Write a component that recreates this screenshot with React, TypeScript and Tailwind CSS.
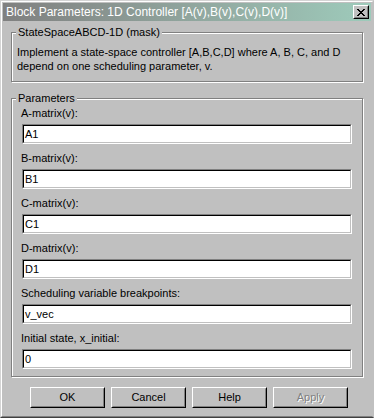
import React from "react";

const font = { fontFamily: '"Liberation Sans", Arial, sans-serif' };

function GroupBox({ title, className, children }: { title: string; className?: string; children: React.ReactNode }) {
  return (
    <div className={"relative mx-[8px] border border-[#808080] shadow-[1px_1px_0_#ffffff,inset_1px_1px_0_#ffffff] " + (className ?? "")}>
      <div className="absolute left-[4px] top-[-8px] bg-[#c0c0c0] px-[2px] text-[11px] leading-[14px] text-black">{title}</div>
      {children}
    </div>
  );
}

function Field({ label, value }: { label: string; value: string }) {
  return (
    <div className="flex flex-col">
      <div className="h-[25px] pt-[8px] pl-[9px] text-[11px] leading-[13px] text-black">{label}</div>
      <div className="ml-[10px] mr-[10px] h-[20px] border border-t-[#808080] border-l-[#808080] border-r-white border-b-white">
        <div className="h-full border border-t-black border-l-black border-r-[#c0c0c0] border-b-[#c0c0c0] bg-white pl-[1px] text-[11px] leading-[16px] text-black">
          {value}
        </div>
      </div>
    </div>
  );
}

function Button({ label, disabled }: { label: string; disabled?: boolean }) {
  return (
    <div className="h-[21px] w-[75px] border border-t-white border-l-white border-r-black border-b-black">
      <div className="flex h-full items-center justify-center border border-t-[#c0c0c0] border-l-[#c0c0c0] border-r-[#808080] border-b-[#808080] text-[11px]">
        <span className={disabled ? "text-[#808080] [text-shadow:1px_1px_0_#ffffff]" : "text-black"}>{label}</span>
      </div>
    </div>
  );
}

export default function App() {
  return (
    <div style={font} className="h-[418px] w-[374px] overflow-hidden bg-[#c0c0c0] select-none">
      <div className="h-full w-full border border-t-[#d4d4d4] border-l-[#d4d4d4] border-r-[#c0c0c0] border-b-[#404040]">
        <div className="h-full w-full border border-t-white border-l-white border-r-[#c0c0c0] border-b-[#808080] pt-[1px] pl-[1px] pr-[1px]">
          {/* title bar */}
          <div className="flex h-[18px] items-center justify-between bg-gradient-to-r from-[#808080] to-[#9ecbbb] pl-[3px] pr-[2px]">
            <span className="text-[12px] leading-[18px] text-white">Block Parameters: 1D Controller [A(v),B(v),C(v),D(v)]</span>
            <div className="h-[14px] w-[16px] border border-t-white border-l-white border-r-black border-b-black">
              <div className="flex h-full items-center justify-center border border-t-[#c0c0c0] border-l-[#c0c0c0] border-r-[#808080] border-b-[#808080] bg-[#c0c0c0]">
                <svg width="8" height="7" viewBox="0 0 8 7">
                  <path d="M0 0h2v1h1v1h2V1h1V0h2v1H7v1H6v1H5v1h1v1h1v1h1v1H6V6H5V5H3v1H2v1H0V6h1V5h1V4h1V3H2V2H1V1H0z" fill="black" />
                </svg>
              </div>
            </div>
          </div>

          <GroupBox title="StateSpaceABCD-1D (mask)" className="mt-[11px] h-[50px]">
            <div className="pl-[5px] pt-[12px] text-[11px] leading-[14px] text-black">
              Implement a state-space controller [A,B,C,D] where A, B, C, and D
              <br />
              depend on one scheduling parameter, v.
            </div>
          </GroupBox>

          <GroupBox title="Parameters" className="mt-[16px] h-[279px]">
            <Field label="A-matrix(v):" value="A1" />
            <Field label="B-matrix(v):" value="B1" />
            <Field label="C-matrix(v):" value="C1" />
            <Field label="D-matrix(v):" value="D1" />
            <Field label="Scheduling variable breakpoints:" value="v_vec" />
            <Field label="Initial state, x_initial:" value="0" />
          </GroupBox>

          <div className="mt-[10px] flex gap-[6px] pl-[27px]">
            <Button label="OK" />
            <Button label="Cancel" />
            <Button label="Help" />
            <Button label="Apply" disabled />
          </div>
        </div>
      </div>
    </div>
  );
}
